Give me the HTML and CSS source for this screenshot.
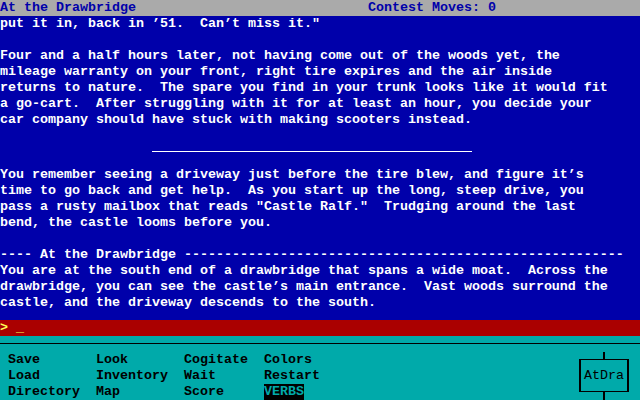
FILE: index.html
```html
<!DOCTYPE html>
<html lang="en">
<head>
    <meta charset="UTF-8">
    <meta name="viewport" content="width=device-width, initial-scale=1.0">
    <title>At the Drawbridge</title>
    <link rel="stylesheet" href="styles.css">
</head>
<body>
    <div class="screen">
        <div class="status">
            <span class="room-name">At the Drawbridge</span>
            <span class="moves">Contest Moves: 0</span>
        </div>

        <div class="story">
            <div class="line">put it in, back in ’51.  Can’t miss it."</div>
            <div class="line"></div>
            <div class="line">Four and a half hours later, not having come out of the woods yet, the</div>
            <div class="line">mileage warranty on your front, right tire expires and the air inside</div>
            <div class="line">returns to nature.  The spare you find in your trunk looks like it would fit</div>
            <div class="line">a go-cart.  After struggling with it for at least an hour, you decide your</div>
            <div class="line">car company should have stuck with making scooters instead.</div>
            <div class="line"></div>
            <div class="line divider"><div class="divider-rule"></div></div>
            <div class="line">You remember seeing a driveway just before the tire blew, and figure it’s</div>
            <div class="line">time to go back and get help.  As you start up the long, steep drive, you</div>
            <div class="line">pass a rusty mailbox that reads "Castle Ralf."  Trudging around the last</div>
            <div class="line">bend, the castle looms before you.</div>
            <div class="line"></div>
            <div class="line">---- At the Drawbridge -------------------------------------------------------</div>
            <div class="line">You are at the south end of a drawbridge that spans a wide moat.  Across the</div>
            <div class="line">drawbridge, you can see the castle’s main entrance.  Vast woods surround the</div>
            <div class="line">castle, and the driveway descends to the south.</div>
            <div class="line"></div>
        </div>

        <div class="prompt">&gt; <span class="cursor">_</span></div>

        <div class="panel">
            <div class="panel-rule"></div>
            <div class="panel-body">
                <div class="menu">
                    <span>Save</span><span>Look</span><span>Cogitate</span><span>Colors</span>
                    <span>Load</span><span>Inventory</span><span>Wait</span><span>Restart</span>
                    <span>Directory</span><span>Map</span><span>Score</span><span class="selected">VERBS</span>
                </div>
                <div class="room-map">
                    <div class="exit"></div>
                    <div class="room-box">AtDra</div>
                    <div class="exit exit-south"></div>
                </div>
            </div>
        </div>
    </div>
</body>
</html>
```

FILE: styles.css
```css
body {
    margin: 0;
    background-color: #0000aa;
}

.screen {
    width: 640px;
    height: 400px;
    overflow: hidden;
    font-family: "Liberation Mono", "DejaVu Sans Mono", monospace;
    font-size: 13.333px;
    font-weight: bold;
    line-height: 16px;
}

.status {
    display: flex;
    height: 16px;
    background-color: #aaaaaa;
    color: #0000aa;
    white-space: pre;
}

.moves {
    margin-left: 232px;
}

.story {
    height: 304px;
    background-color: #0000aa;
    color: #ffffff;
}

.line {
    height: 16px;
    white-space: pre;
}

.divider-rule {
    width: 320px;
    height: 1px;
    margin: 7px 0 0 152px;
    background-color: #ffffff;
}

.prompt {
    height: 16px;
    background-color: #aa0000;
    color: #ffff55;
    white-space: pre;
}

.panel {
    height: 64px;
    background-color: #00aaaa;
    color: #000000;
    padding-top: 7px;
    box-sizing: border-box;
}

.panel-rule {
    height: 1px;
    background-color: #000000;
    margin-bottom: 8px;
}

.panel-body {
    display: flex;
    height: 48px;
}

.menu {
    display: grid;
    grid-template-columns: 88px 88px 80px 40px;
    grid-auto-rows: 16px;
    padding-left: 8px;
    white-space: nowrap;
}

.menu .selected {
    background-color: #000000;
    color: #00aaaa;
}

.room-map {
    display: flex;
    flex-direction: column;
    align-items: center;
    margin-left: auto;
    margin-right: 11px;
}

.exit {
    width: 2px;
    height: 7px;
    background-color: #000000;
}

.exit-south {
    height: 8px;
}

.room-box {
    width: 46px;
    height: 31px;
    border: 1px solid #000000;
    border-left-width: 2px;
    border-right-width: 2px;
    text-align: center;
    line-height: 31px;
    font-weight: normal;
}
```
